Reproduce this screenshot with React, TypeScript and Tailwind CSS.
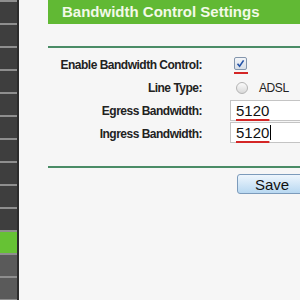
const MENU = Array.from({ length: 14 }, (_, i) => i)

function Sidebar() {
  return (
    <div className="flex w-[19px] shrink-0 flex-col border-r-2 border-[#2c2c2c]">
      {MENU.map((i) => (
        <div
          key={i}
          className={
            i === 10
              ? "h-[23px] shrink-0 border-t-2 border-[#8e8e8e] bg-[#66c234]"
              : i > 10
                ? "h-[23px] shrink-0 border-t-2 border-[#8e8e8e] bg-[#5a5a5a]"
                : "h-[23px] shrink-0 border-t-2 border-[#8e8e8e] bg-[#3e3e3e]"
          }
        />
      ))}
    </div>
  )
}

function Label({ children }: { children: React.ReactNode }) {
  return (
    <div className="text-right text-[12px] font-bold tracking-[-0.5px] text-[#222]">
      {children}
    </div>
  )
}

function CheckBox() {
  return (
    <div className="ml-[4px] flex flex-col">
      <svg width="13" height="13" viewBox="0 0 13 13">
        <defs>
          <linearGradient id="cb" x1="0" y1="0" x2="0" y2="1">
            <stop offset="0" stopColor="#f4f6f9" />
            <stop offset="1" stopColor="#d6dde6" />
          </linearGradient>
        </defs>
        <rect x="0.5" y="0.5" width="12" height="12" rx="1.5" fill="url(#cb)" stroke="#8496ad" />
        <path d="M3.5 6.8 L5.6 9.2 L9.6 3.4" fill="none" stroke="#2453a8" strokeWidth="1.6" />
      </svg>
      <div className="mt-[2px] h-[2px] w-[14px] bg-[#d42626]" />
    </div>
  )
}

function Radio() {
  return (
    <div className="ml-[6px] flex items-center">
      <div className="h-[12px] w-[12px] rounded-full border border-[#b4b4b4] bg-gradient-to-b from-[#fafafa] to-[#d9d9d9]" />
      <span className="ml-[11px] text-[12px] tracking-[-0.4px] text-[#222]">ADSL</span>
    </div>
  )
}

function Field({ value, cursor }: { value: string; cursor?: boolean }) {
  return (
    <div className="flex h-[21px] items-center border border-[#c4c4c4] bg-white pl-[5px]">
      <span className="text-[15px] leading-none text-[#111] underline decoration-[#d42626] decoration-2 underline-offset-[3px]">
        {value}
      </span>
      {cursor && <span className="ml-[1px] h-[15px] w-px bg-black" />}
    </div>
  )
}

export default function App() {
  return (
    <div className="flex h-[300px] w-[300px] overflow-hidden bg-[#f6f6f6] font-['Liberation_Sans',Arial,sans-serif]">
      <Sidebar />
      <div className="ml-[29px] flex flex-1 flex-col">
        <div className="flex h-[24px] items-center bg-[#61b934] pl-[14px] text-[15px] leading-[24px] font-bold whitespace-nowrap text-[#f3f9e8]">
          Bandwidth Control Settings
        </div>
        <div className="mt-[22px] h-[2px] bg-[#4a8c66]" />

        <div className="mt-[5px] grid grid-cols-[154px_1fr] gap-x-[28px]">
          <div className="flex h-[23px] items-center justify-end">
            <Label>Enable Bandwidth Control:</Label>
          </div>
          <div className="flex h-[23px] items-center pt-[2px]">
            <CheckBox />
          </div>

          <div className="flex h-[23px] items-center justify-end">
            <Label>Line Type:</Label>
          </div>
          <div className="flex h-[23px] items-center">
            <Radio />
          </div>

          <div className="flex h-[23px] items-center justify-end">
            <Label>Egress Bandwidth:</Label>
          </div>
          <div className="flex h-[23px] flex-col justify-center">
            <Field value="5120" />
          </div>

          <div className="flex h-[23px] items-center justify-end">
            <Label>Ingress Bandwidth:</Label>
          </div>
          <div className="flex h-[23px] flex-col justify-start">
            <Field value="5120" cursor />
          </div>
        </div>

        <div className="mt-[21px] h-[2px] bg-[#4a8c66]" />

        <div className="mt-[6px] ml-[189px] flex">
          <button className="flex h-[20px] w-[90px] shrink-0 items-center rounded-[3px] border border-[#7c9bbb] bg-gradient-to-b from-[#eef6fd] to-[#b8d8f1] pl-[17px] text-[15px] leading-none text-[#111]">
            Save
          </button>
        </div>
      </div>
    </div>
  )
}
